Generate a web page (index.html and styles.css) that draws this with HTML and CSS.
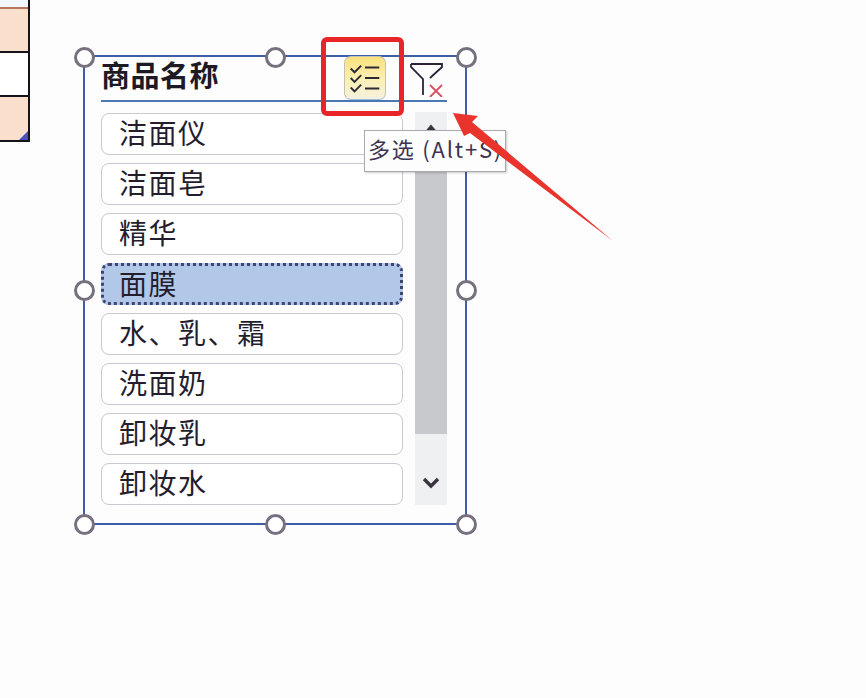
FILE: index.html
```html
<!DOCTYPE html>
<html lang="zh">
<head>
<meta charset="utf-8">
<title>切片器</title>
<link rel="stylesheet" href="styles.css">
</head>
<body>
<div class="sheet">
  <div class="cells">
    <div class="cell cell-top"></div>
    <div class="cell cell-peach"></div>
    <div class="cell"></div>
    <div class="cell cell-peach cell-last"></div>
  </div>

  <div class="slicer">
    <div class="header">
      <span class="title">商品名称</span>
      <span class="icon-btn active">
        <svg width="41" height="42" viewBox="0 0 42 42" fill="none" stroke="#2c2a33">
          <path d="M6 11l4 4 7-7M6 21l4 4 7-7M6 31l4 4 7-7" stroke-width="2"/>
          <path d="M21 10h15M21 21h15M21 32h15" stroke-width="2.2"/>
        </svg>
      </span>
      <span class="icon-btn">
        <svg width="36" height="36" viewBox="0 0 36 36" fill="none">
          <path d="M2 3h31v3L21 17M2 3v3l12 12v16" stroke="#2c2436" stroke-width="1.8"/>
          <path d="M21 24l12 12M33 24L21 36" stroke="#d9505c" stroke-width="1.8"/>
        </svg>
      </span>
    </div>
    <div class="body">
      <ul class="items">
        <li class="item">洁面仪</li>
        <li class="item">洁面皂</li>
        <li class="item">精华</li>
        <li class="item selected">面膜</li>
        <li class="item">水、乳、霜</li>
        <li class="item">洗面奶</li>
        <li class="item">卸妆乳</li>
        <li class="item">卸妆水</li>
      </ul>
      <div class="scrollbar">
        <div class="arrow-zone">
          <svg width="14" height="10" viewBox="0 0 14 10"><path d="M2 9l5-6 5 6z" fill="#3a3640" stroke="#3a3640" stroke-width="2"/></svg>
        </div>
        <div class="thumb"></div>
        <div class="arrow-zone arrow-end">
          <svg width="18" height="13" viewBox="0 0 18 13"><path d="M2 3l7 7 7-7" fill="none" stroke="#3a3640" stroke-width="3.4"/></svg>
        </div>
      </div>
    </div>
    <span class="handle h-tl"></span>
    <span class="handle h-tc"></span>
    <span class="handle h-tr"></span>
    <span class="handle h-ml"></span>
    <span class="handle h-mr"></span>
    <span class="handle h-bl"></span>
    <span class="handle h-bc"></span>
    <span class="handle h-br"></span>
  </div>

  <div class="tooltip">多选 (Alt+S)</div>
  <div class="callout"></div>
  <svg class="arrow" width="866" height="698" viewBox="0 0 866 698">
    <path d="M453 113L478 116 472 122 613 241 470 133 464 136Z" fill="#e8342c"/>
  </svg>
</div>
</body>
</html>
```
FILE: styles.css
```css
* { box-sizing: border-box; }
html, body { margin: 0; padding: 0; }
body {
  width: 866px;
  height: 698px;
  overflow: hidden;
  background: #fdfdfe;
  font-family: "Noto Sans CJK SC", "Noto Sans", sans-serif;
  color: #221c2c;
}
.sheet { position: relative; width: 866px; height: 698px; }

.cells {
  position: absolute;
  left: 0;
  top: 0;
  width: 30px;
  height: 142px;
  border-right: 2px solid #15121a;
  border-bottom: 2px solid #15121a;
  display: flex;
  flex-direction: column;
}
.cell { height: 44px; border-bottom: 2px solid #15121a; background: #fff; }
.cell-top { height: 9px; background: #f3f6fa; border-bottom: 2px solid #b8745c; }
.cell-peach { background: #fbdfcd; }
.cell-last { flex: 1; border-bottom: 0; position: relative; }
.cell-last::after {
  content: "";
  position: absolute;
  right: 0;
  bottom: 0;
  border-style: solid;
  border-width: 0 0 9px 9px;
  border-color: transparent transparent #4a50c0 transparent;
}

.slicer {
  position: absolute;
  left: 83px;
  top: 55px;
  width: 384px;
  height: 470px;
  border: 2px solid #3f5ea8;
  padding: 0 18px 0 16px;
}
.header {
  height: 45px;
  border-bottom: 2px solid #4a78b4;
  display: flex;
  align-items: center;
}
.title {
  font-size: 29px;
  font-weight: 700;
  line-height: 42px;
  letter-spacing: 0.5px;
  flex: 1;
  margin-top: -10px;
  color: #1d1a24;
}
.icon-btn { display: flex; align-items: center; justify-content: center; }
.icon-btn.active {
  width: 42px;
  height: 44px;
  margin-right: 23px;
  margin-top: -1px;
  border: 1px solid #c6c2b0;
  border-bottom-color: #9fc0dc;
  border-radius: 7px;
  background: linear-gradient(#fbe27e, #fbf0b5 55%, #f5f0df);
}
.icon-btn:last-child { width: 38px; margin-right: 1px; margin-top: 0; margin-left: -1px; }

.body { display: flex; gap: 12px; margin-top: 11px; }
.items {
  list-style: none;
  margin: 0;
  padding: 0;
  width: 303px;
  display: flex;
  flex-direction: column;
  gap: 8px;
}
.item {
  height: 42px;
  border: 1px solid #c9c9cf;
  border-radius: 8px;
  background: #fff;
  padding-left: 17px;
  font-size: 28px;
  line-height: 36px;
  letter-spacing: 1.5px;
  color: #241d2e;
}
.item.selected {
  background: #b2c8e8;
  border: 3px dotted #3d4470;
  padding-left: 15px;
  line-height: 34px;
}

.scrollbar {
  width: 32px;
  height: 393px;
  background: #eff0f2;
  display: flex;
  flex-direction: column;
  margin-top: -1px;
}
.arrow-zone {
  height: 53px;
  display: flex;
  justify-content: center;
  padding-top: 11px;
}
.arrow-end { height: 71px; padding-top: 42px; margin-top: auto; }
.thumb { height: 269px; background: #c8c9cc; }

.handle {
  position: absolute;
  width: 21px;
  height: 21px;
  border: 3px solid #77707f;
  border-radius: 50%;
  background: #fff;
}
.h-tl { left: -11px; top: -10px; }
.h-tc { left: 180px; top: -10px; }
.h-tr { left: 371px; top: -10px; }
.h-ml { left: -11px; top: 223px; }
.h-mr { left: 371px; top: 223px; }
.h-bl { left: -11px; top: 457px; }
.h-bc { left: 180px; top: 457px; }
.h-br { left: 371px; top: 457px; }

.tooltip {
  position: absolute;
  left: 364px;
  top: 130px;
  width: 142px;
  height: 42px;
  border: 1px solid #a9a9ae;
  background: #fdfdfe;
  box-shadow: 1px 1px 2px rgba(0, 0, 0, 0.2);
  padding-left: 3px;
  font-size: 22px;
  line-height: 35px;
  letter-spacing: 1.8px;
  white-space: nowrap;
  overflow: hidden;
  color: #3d3350;
}
.callout {
  position: absolute;
  left: 321px;
  top: 37px;
  width: 83px;
  height: 79px;
  border: 5px solid #e8262a;
  border-radius: 6px;
}
.arrow { position: absolute; left: 0; top: 0; pointer-events: none; }
```
